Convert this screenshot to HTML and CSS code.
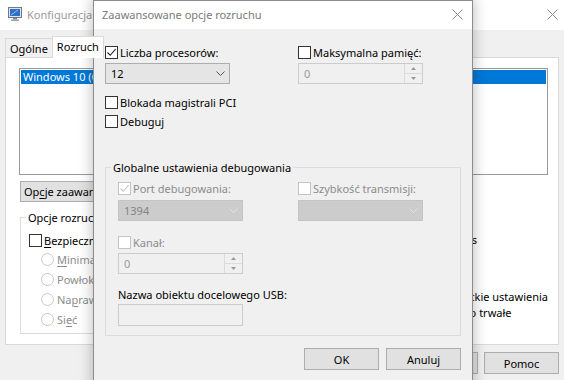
FILE: index.html
```html
<!DOCTYPE html>
<html lang="pl">
<head>
  <meta charset="UTF-8" />
  <title>Konfiguracja systemu</title>
  <link rel="stylesheet" href="styles.css">
</head>
<body>

  <div class="window">
    <div class="titlebar">
      <svg class="app-icon" width="16" height="16" viewBox="0 0 16 16">
        <rect x="1.5" y="1.5" width="13" height="10" fill="#dfe4ec" stroke="#6b7a90"/>
        <rect x="3" y="3" width="10" height="7" fill="#2f6fc4"/>
        <path d="M4 9 L11 4" stroke="#9cc4f0" stroke-width="1"/>
        <rect x="6" y="12" width="4" height="1.5" fill="#7d8898"/>
        <rect x="4" y="13.5" width="8" height="1.5" fill="#9aa4b2"/>
      </svg>
      <span class="title">Konfiguracja systemu</span>
      <svg class="close-x" width="11" height="11" viewBox="0 0 11 11">
        <path d="M0.5 0.5 L10.5 10.5 M10.5 0.5 L0.5 10.5" stroke="#8a8a8a" stroke-width="1"/>
      </svg>
    </div>

    <div class="tabs">
      <div class="tab">Ogólne</div>
      <div class="tab active">Rozruch</div>
      <div class="tab">Usługi</div>
      <div class="tab">Uruchamianie</div>
      <div class="tab">Narzędzia</div>
    </div>

    <div class="tab-panel">
      <div class="listbox">
        <div class="list-item selected">Windows 10 (C:\Windows) : Bieżący system operacyjny; Domyślny SO</div>
      </div>

      <div class="panel-actions">
        <button class="btn wide">Op<u>c</u>je zaawansowane...</button>
        <button class="btn">Ustaw jako domyślny</button>
        <button class="btn">Usuń</button>
      </div>

      <div class="boot-row">
        <fieldset class="group boot-options">
          <legend>Opcje rozruchu</legend>
          <label class="check-row first">
            <span class="box"></span>
            <span><u>B</u>ezpieczny rozruch</span>
          </label>
          <div class="radio-row"><span class="radio"></span><span><u>M</u>inimalny</span></div>
          <div class="radio-row"><span class="radio"></span><span>Powłoka alternatywna</span></div>
          <div class="radio-row"><span class="radio"></span><span>Na<u>p</u>rawa usługi Active Directory</span></div>
          <div class="radio-row"><span class="radio"></span><span>Si<u>e</u>ć</span></div>
        </fieldset>

        <div class="boot-side">
          <div class="timeout-label">Limit czasu:</div>
          <div class="timeout-row">
            <span class="edit">30</span>
            <span>s</span>
          </div>
          <label class="check-row multi">
            <span class="box"></span>
            <span>Ustaw wszystkie ustawienia<br>rozruchu jako trwałe</span>
          </label>
        </div>
      </div>
    </div>

    <div class="window-buttons">
      <button class="btn">OK</button>
      <button class="btn">Anuluj</button>
      <button class="btn">Zastosuj</button>
      <button class="btn">Pomoc</button>
    </div>
  </div>

  <!-- Advanced boot options dialog -->
  <div class="dialog">
    <div class="dlg-titlebar">
      <span class="dlg-title">Zaawansowane opcje rozruchu</span>
      <svg class="close-x" width="11" height="11" viewBox="0 0 11 11">
        <path d="M0.5 0.5 L10.5 10.5 M10.5 0.5 L0.5 10.5" stroke="#8a8a8a" stroke-width="1"/>
      </svg>
    </div>

    <div class="dlg-body">
      <div class="dlg-grid">
        <div class="col">
          <label class="check-row">
            <span class="box">
              <svg width="11" height="11" viewBox="0 0 11 11"><path d="M1.5 5.5 L4.2 8.3 L9.6 2.2" fill="none" stroke="#222" stroke-width="1.1"/></svg>
            </span>
            <span>Liczba procesorów:</span>
          </label>
          <div class="combo">
            <span>12</span>
            <svg width="9" height="5" viewBox="0 0 9 5"><path d="M0.5 0.5 L4.5 4.5 L8.5 0.5" fill="none" stroke="#555" stroke-width="1"/></svg>
          </div>
          <label class="check-row gap-big">
            <span class="box"></span>
            <span>Blokada magistrali PCI</span>
          </label>
          <label class="check-row gap-small">
            <span class="box"></span>
            <span>Debuguj</span>
          </label>
        </div>
        <div class="col">
          <label class="check-row">
            <span class="box"></span>
            <span>Maksymalna pamięć:</span>
          </label>
          <div class="spin">
            <span>0</span>
            <div class="spin-btns">
              <span><svg width="5" height="3" viewBox="0 0 5 3"><path d="M0 3 L2.5 0 L5 3Z" fill="#999"/></svg></span>
              <span><svg width="5" height="3" viewBox="0 0 5 3"><path d="M0 0 L2.5 3 L5 0Z" fill="#999"/></svg></span>
            </div>
          </div>
        </div>
      </div>

      <fieldset class="group debug-group">
        <legend>Globalne ustawienia debugowania</legend>
        <div class="group-grid">
          <div class="col">
            <label class="check-row disabled">
              <span class="box">
                <svg width="11" height="11" viewBox="0 0 11 11"><path d="M1.5 5.5 L4.2 8.3 L9.6 2.2" fill="none" stroke="#c4c4c4" stroke-width="1.1"/></svg>
              </span>
              <span>Port debugowania:</span>
            </label>
            <div class="combo disabled">
              <span>1394</span>
              <svg width="9" height="5" viewBox="0 0 9 5"><path d="M0.5 0.5 L4.5 4.5 L8.5 0.5" fill="none" stroke="#e2e2e2" stroke-width="1"/></svg>
            </div>
            <label class="check-row disabled gap-mid">
              <span class="box"></span>
              <span>Kanał:</span>
            </label>
            <div class="spin">
              <span>0</span>
              <div class="spin-btns">
                <span><svg width="5" height="3" viewBox="0 0 5 3"><path d="M0 3 L2.5 0 L5 3Z" fill="#999"/></svg></span>
                <span><svg width="5" height="3" viewBox="0 0 5 3"><path d="M0 0 L2.5 3 L5 0Z" fill="#999"/></svg></span>
              </div>
            </div>
            <div class="field-label">Nazwa obiektu docelowego USB:</div>
            <div class="edit usb"></div>
          </div>
          <div class="col">
            <label class="check-row disabled">
              <span class="box"></span>
              <span>Szybkość transmisji:</span>
            </label>
            <div class="combo disabled">
              <span></span>
              <svg width="9" height="5" viewBox="0 0 9 5"><path d="M0.5 0.5 L4.5 4.5 L8.5 0.5" fill="none" stroke="#e2e2e2" stroke-width="1"/></svg>
            </div>
          </div>
        </div>
      </fieldset>

      <div class="dlg-buttons">
        <button class="btn">OK</button>
        <button class="btn">Anuluj</button>
      </div>
    </div>
  </div>

</body>
</html>
```

FILE: styles.css
```css
  body {
    margin: 0;
    width: 564px;
    height: 380px;
    overflow: hidden;
    position: relative;
    background-color: #f0f0f0;
    font-family: "Noto Sans", sans-serif;
    font-size: 11px;
    line-height: 15px;
    color: #000;
  }
  u {
    text-decoration-thickness: 1px;
    text-underline-offset: 2px;
  }
  .btn {
    height: 22px;
    width: 75px;
    padding: 0;
    border: 1px solid #adadad;
    background: #e1e1e1;
    font-family: inherit;
    font-size: 11px;
    color: #000;
  }
  .btn.wide {
    width: auto;
    padding: 0 3px;
  }

  /* Background window */
  .window {
    width: 564px;
  }
  .titlebar {
    height: 30px;
    background: #fff;
    display: flex;
    align-items: center;
    padding-left: 7px;
    padding-bottom: 2px;
    box-sizing: border-box;
  }
  .app-icon {
    margin-right: 4px;
  }
  .title {
    color: #999;
    flex: 1;
  }
  .titlebar .close-x {
    margin-right: 6px;
  }
  .tabs {
    display: flex;
    align-items: flex-end;
    height: 21px;
    margin: 6px 5px 0;
  }
  .tab {
    height: 19px;
    box-sizing: border-box;
    padding: 0 4px;
    border: 1px solid #d9d9d9;
    border-bottom: none;
    background: #f0f0f0;
    display: flex;
    align-items: center;
    margin-right: -1px;
  }
  .tab.active {
    height: 22px;
    margin-bottom: -1px;
    background: #fff;
    position: relative;
    z-index: 1;
    padding-bottom: 3px;
  }
  .tab-panel {
    margin: 0 5px;
    height: 288px;
    box-sizing: border-box;
    border: 1px solid #d9d9d9;
    background: #fff;
    padding: 10px 10px 0 13px;
  }
  .listbox {
    width: 529px;
    height: 107px;
    box-sizing: border-box;
    border: 1px solid #999;
    padding: 1px;
    overflow: hidden;
  }
  .list-item {
    white-space: nowrap;
    padding-left: 2px;
    line-height: 14px;
  }
  .list-item.selected {
    background: #0078d7;
    color: #fff;
  }
  .panel-actions {
    display: flex;
    gap: 6px;
    margin-top: 6px;
    margin-left: 1px;
  }
  .panel-actions .btn {
    height: 21px;
  }
  .boot-row {
    display: flex;
    margin-top: 8px;
    margin-left: 1px;
  }
  .group {
    margin: 0;
    border: 1px solid #dcdcdc;
    min-width: 0;
  }
  .group legend {
    padding: 0 2px;
  }
  .boot-options {
    width: 361px;
    box-sizing: border-box;
    padding: 0 0 4px 5px;
  }
  .check-row {
    display: flex;
    align-items: center;
    gap: 2px;
    height: 15px;
    white-space: nowrap;
  }
  .box {
    width: 13px;
    height: 13px;
    box-sizing: border-box;
    border: 1px solid #333;
    background: #fff;
    flex: none;
  }
  .box svg {
    display: block;
  }
  .check-row.disabled {
    color: #8c8c8c;
  }
  .check-row.disabled .box {
    border-color: #c4c4c4;
  }
  .boot-options .check-row.first {
    margin: 8px 0 1px 3px;
  }
  .radio-row {
    display: flex;
    align-items: center;
    gap: 3px;
    height: 20px;
    margin-left: 15px;
    color: #8c8c8c;
    white-space: nowrap;
  }
  .radio {
    width: 13px;
    height: 13px;
    box-sizing: border-box;
    border-radius: 50%;
    border: 1px solid #c8c8c8;
    background: #fff;
  }
  .boot-side {
    margin-left: 10px;
  }
  .timeout-label {
    margin-top: 2px;
  }
  .timeout-row {
    display: flex;
    align-items: center;
    gap: 8px;
    margin-top: 2px;
  }
  .edit {
    display: block;
    height: 21px;
    width: 74px;
    box-sizing: border-box;
    border: 1px solid #ccc;
    background: #f0f0f0;
    padding: 2px 5px;
    color: #999;
  }
  .check-row.multi {
    height: auto;
    align-items: flex-start;
    gap: 3px;
    line-height: 16px;
    margin-top: 39px;
  }
  .check-row.multi .box {
    margin-top: 2px;
  }
  .window-buttons {
    display: flex;
    justify-content: flex-end;
    gap: 6px;
    margin-top: 7px;
    padding-right: 5px;
  }

  /* Dialog */
  .dialog {
    position: absolute;
    left: 93px;
    top: 0;
    width: 380px;
    height: 400px;
    box-sizing: border-box;
    border: 1px solid #8c8c8c;
    background: #f0f0f0;
    box-shadow: 0 0 12px 2px rgba(0, 0, 0, 0.22);
  }
  .dlg-titlebar {
    height: 28px;
    background: #fff;
    display: flex;
    align-items: center;
    padding: 0 9px 1px 8px;
    box-sizing: border-box;
  }
  .dlg-title {
    flex: 1;
    color: #7a7a7a;
  }
  .dlg-body {
    padding: 16px 11px 0 11px;
  }
  .dlg-grid {
    display: grid;
    grid-template-columns: 193px 1fr;
  }
  .combo {
    width: 125px;
    height: 21px;
    box-sizing: border-box;
    border: 1px solid #adadad;
    background: #e5e5e5;
    display: flex;
    align-items: center;
    justify-content: space-between;
    padding: 0 4px 0 5px;
    margin-top: 3px;
  }
  .combo.disabled {
    background: #cccccc;
    border-color: #c4c4c4;
    color: #838383;
    margin-top: 4px;
  }
  .gap-big {
    margin-top: 11px;
  }
  .gap-small {
    margin-top: 4px;
  }
  .gap-mid {
    margin-top: 14px;
  }
  .spin {
    width: 125px;
    height: 21px;
    box-sizing: border-box;
    border: 1px solid #ccc;
    background: #f0f0f0;
    display: flex;
    justify-content: space-between;
    color: #999;
    margin-top: 3px;
  }
  .spin > span {
    padding: 2px 5px;
  }
  .spin-btns {
    width: 17px;
    display: flex;
    flex-direction: column;
    border-left: 1px solid #dcdcdc;
  }
  .spin-btns span {
    flex: 1;
    display: flex;
    align-items: center;
    justify-content: center;
  }
  .spin-btns span + span {
    border-top: 1px solid #dcdcdc;
  }
  .spin-btns svg {
    display: block;
  }
  .debug-group {
    margin-top: 31px;
    padding: 0 0 9px 5px;
  }
  .group-grid {
    display: grid;
    grid-template-columns: 180px 1fr;
    padding-left: 7px;
    margin-top: 6px;
  }
  .field-label {
    margin-top: 13px;
  }
  .edit.usb {
    width: 125px;
    height: 22px;
    margin-top: 2px;
  }
  .dlg-buttons {
    display: flex;
    justify-content: flex-end;
    gap: 7px;
    margin-top: 12px;
  }
```
